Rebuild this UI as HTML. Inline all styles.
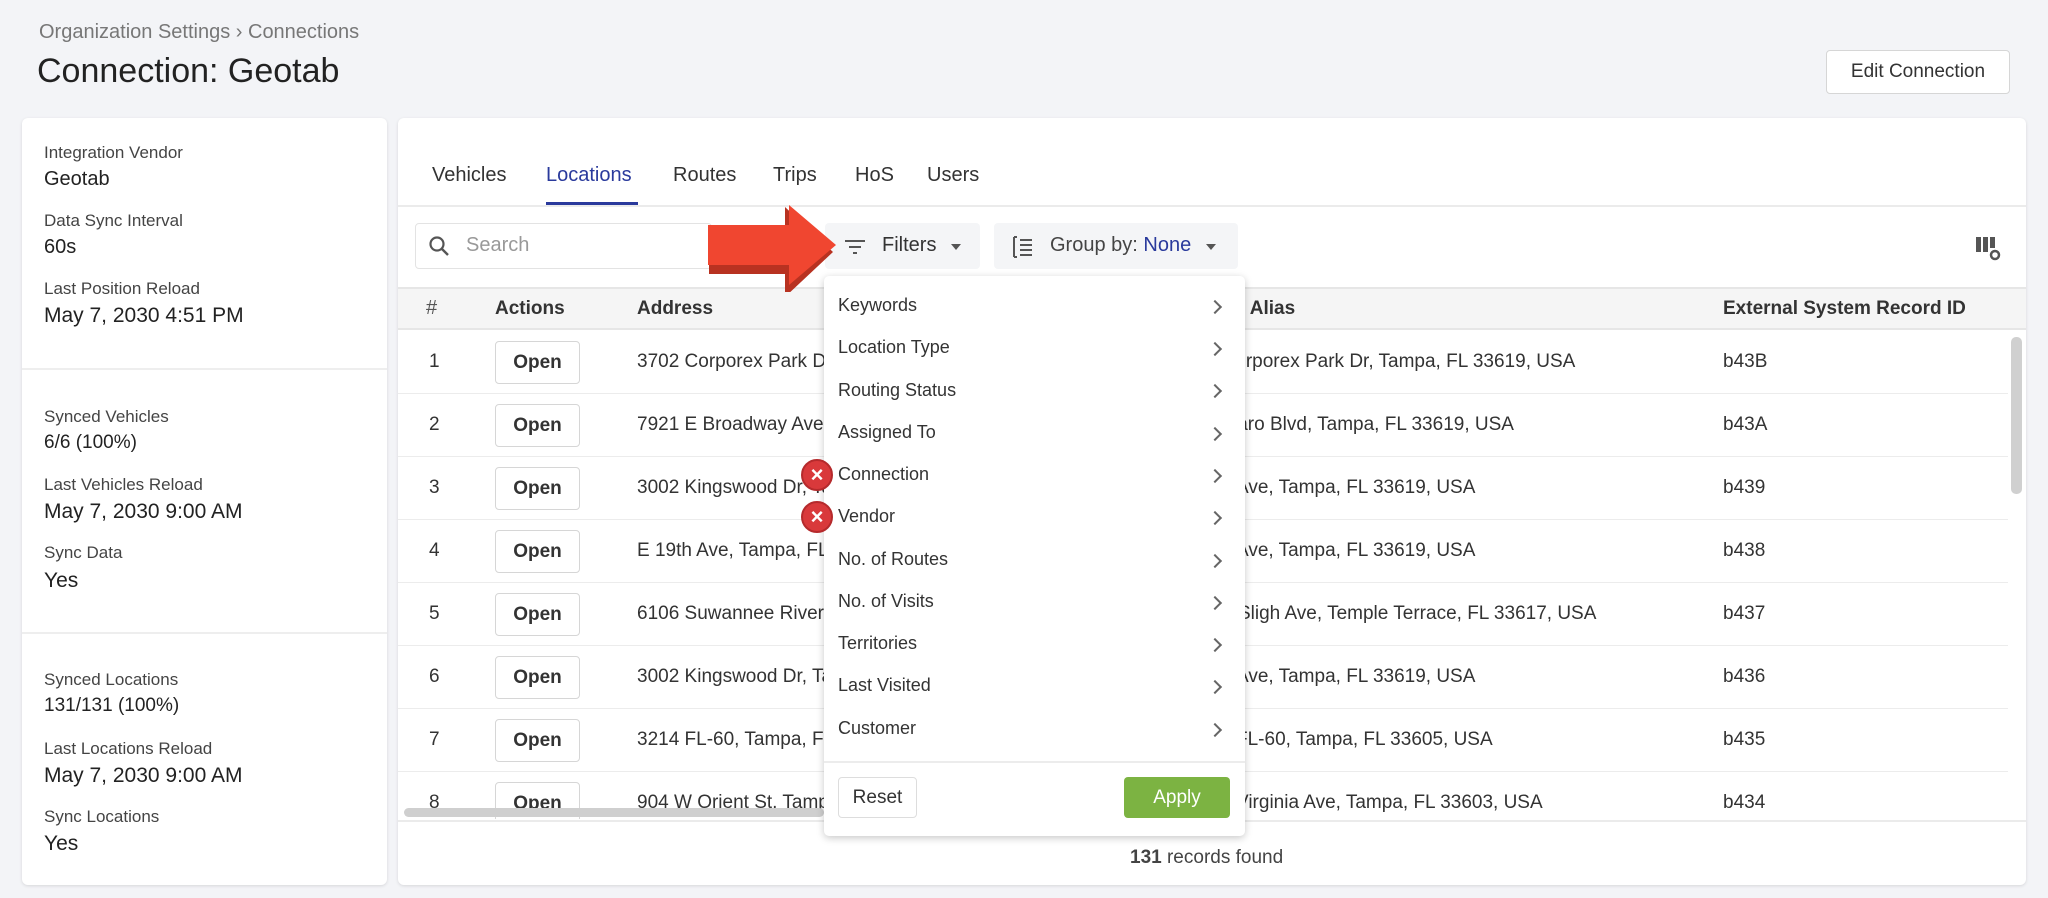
<!DOCTYPE html>
<html><head><meta charset="utf-8"><style>
*{box-sizing:border-box;margin:0;padding:0}
body{width:2048px;height:898px;overflow:hidden;background:#f3f4f7;font-family:"Liberation Sans",sans-serif;color:#333;position:relative}
.a{position:absolute;white-space:nowrap}
.card{position:absolute;background:#fff;border-radius:6px;box-shadow:0 1px 3px rgba(0,0,0,.12)}
.lbl{font-size:17px;color:#444;left:22px}
.val{font-size:20px;color:#222;left:22px}
.big{font-size:21px}
.tab{font-size:20px;top:46px;color:#333}
.row{position:absolute;left:0;width:1610px;height:63px;border-bottom:1px solid #ececec}
.c{position:absolute;top:0;line-height:62px;font-size:19px;color:#333;white-space:nowrap}
.open{position:absolute;left:97px;top:10px;width:85px;height:43px;border:1px solid #d6d6d6;border-radius:4px;font-size:19px;font-weight:bold;text-align:center;line-height:41px;color:#333;background:#fff}
.mi{position:absolute;left:14px;font-size:18px;color:#333}
.ch{position:absolute;left:386px;width:10px;height:10px;border-right:2px solid #666;border-top:2px solid #666;transform:rotate(45deg)}
.x{position:absolute;left:-23px;width:32px;height:32px;border-radius:50%;background:#d9393b;border:2px solid #b52a2c;color:#fff;font-size:22px;font-weight:bold;text-align:center;line-height:27px}
</style></head><body>
<div class="a" style="left:39px;top:21px;font-size:20px;color:#777">Organization Settings &#8250; Connections</div>
<div class="a" style="left:37px;top:52px;font-size:34px;color:#222">Connection: Geotab</div>
<div class="a" style="left:1826px;top:50px;width:184px;height:44px;border:1px solid #d6d6d6;border-radius:4px;background:#fff;font-size:19px;text-align:center;line-height:42px;color:#333">Edit Connection</div>

<div class="card" style="left:22px;top:118px;width:365px;height:767px">
<div class="a lbl" style="top:25px">Integration Vendor</div>
<div class="a val" style="top:50px">Geotab</div>
<div class="a lbl" style="top:93px">Data Sync Interval</div>
<div class="a val" style="top:118px">60s</div>
<div class="a lbl" style="top:161px">Last Position Reload</div>
<div class="a val big" style="top:186px">May 7, 2030 4:51 PM</div>
<div class="a" style="left:0;top:250px;width:365px;height:2px;background:#eee"></div>
<div class="a lbl" style="top:289px">Synced Vehicles</div>
<div class="a val" style="top:314px;font-size:19px">6/6 (100%)</div>
<div class="a lbl" style="top:357px">Last Vehicles Reload</div>
<div class="a val big" style="top:382px">May 7, 2030 9:00 AM</div>
<div class="a lbl" style="top:425px">Sync Data</div>
<div class="a val big" style="top:451px">Yes</div>
<div class="a" style="left:0;top:514px;width:365px;height:2px;background:#eee"></div>
<div class="a lbl" style="top:552px">Synced Locations</div>
<div class="a val" style="top:577px;font-size:19px">131/131 (100%)</div>
<div class="a lbl" style="top:621px">Last Locations Reload</div>
<div class="a val big" style="top:646px">May 7, 2030 9:00 AM</div>
<div class="a lbl" style="top:689px">Sync Locations</div>
<div class="a val big" style="top:714px">Yes</div>
</div>

<div class="card" style="left:398px;top:118px;width:1628px;height:767px;overflow:hidden">
<div class="a tab" style="left:34px">Vehicles</div>
<div class="a tab" style="left:148px;color:#2a3a9c">Locations</div>
<div class="a" style="left:148px;top:84px;width:92px;height:3px;background:#2a3a9c"></div>
<div class="a tab" style="left:275px">Routes</div>
<div class="a tab" style="left:375px">Trips</div>
<div class="a tab" style="left:457px">HoS</div>
<div class="a tab" style="left:529px">Users</div>
<div class="a" style="left:0;top:87px;width:1628px;height:2px;background:#ebebeb"></div>
<div class="a" style="left:17px;top:105px;width:297px;height:46px;border:1px solid #e3e3e3;border-radius:4px"></div>
<svg class="a" style="left:30px;top:117px" width="22" height="22" viewBox="0 0 22 22"><circle cx="9" cy="9" r="6.5" fill="none" stroke="#555" stroke-width="2.2"/><path d="M14 14l6 6" stroke="#555" stroke-width="2.4"/></svg>
<div class="a" style="left:68px;top:116px;font-size:20px;color:#999">Search</div>
<div class="a" style="left:427px;top:105px;width:155px;height:46px;background:#f4f5f7;border-radius:4px"></div>
<svg class="a" style="left:446px;top:120px" width="22" height="18"><path d="M1 3h20M5 9h12M9 15h4" stroke="#555" stroke-width="2"/></svg>
<div class="a" style="left:484px;top:116px;font-size:20px;color:#333">Filters</div>
<div class="a" style="left:553px;top:126px;border:5px solid transparent;border-top:6px solid #555"></div>
<div class="a" style="left:596px;top:105px;width:244px;height:46px;background:#f4f5f7;border-radius:4px"></div>
<svg class="a" style="left:614px;top:117px" width="22" height="24"><path d="M2 2v20M2 2h3M2 22h3M8 5h12M8 10h12M8 15h12M8 20h12" stroke="#555" stroke-width="2"/></svg>
<div class="a" style="left:652px;top:116px;font-size:20px;color:#444">Group by: <span style="color:#2a3a9c">None</span></div>
<div class="a" style="left:808px;top:126px;border:5px solid transparent;border-top:6px solid #555"></div>
<svg class="a" style="left:1578px;top:119px" width="26" height="24"><rect x="0" y="0" width="5" height="15" fill="#555"/><rect x="7" y="0" width="5" height="15" fill="#555"/><rect x="14" y="0" width="5" height="11" fill="#555"/><circle cx="19" cy="18" r="4" fill="none" stroke="#555" stroke-width="2.5"/></svg>

<div class="a" style="left:0;top:169px;width:1628px;height:43px;background:#f5f5f5;border-top:2px solid #e6e6e6;border-bottom:2px solid #e6e6e6"></div>
<div class="a" style="left:28px;top:179px;font-size:20px;color:#555">#</div>
<div class="a" style="left:97px;top:180px;font-size:19px;font-weight:bold;color:#333">Actions</div>
<div class="a" style="left:239px;top:180px;font-size:19px;font-weight:bold;color:#333">Address</div>
<div class="a" style="left:768px;top:180px;font-size:19px;font-weight:bold;color:#333">Location Alias</div>
<div class="a" style="left:1325px;top:180px;font-size:19px;font-weight:bold;color:#333">External System Record ID</div>

<div class="a" style="left:0;top:213px;width:1610px;height:488px;overflow:hidden">
<div class="row" style="top:0"><div class="c" style="left:31px">1</div><div class="open">Open</div><div class="c" style="left:239px">3702 Corporex Park Dr, Tampa</div><div class="c" style="left:776px">3702 Corporex Park Dr, Tampa, FL 33619, USA</div><div class="c" style="left:1325px">b43B</div></div>
<div class="row" style="top:63px"><div class="c" style="left:31px">2</div><div class="open">Open</div><div class="c" style="left:239px">7921 E Broadway Ave, Tampa</div><div class="c" style="left:778px">1 Massaro Blvd, Tampa, FL 33619, USA</div><div class="c" style="left:1325px">b43A</div></div>
<div class="row" style="top:126px"><div class="c" style="left:31px">3</div><div class="open">Open</div><div class="c" style="left:239px">3002 Kingswood Dr, Tampa</div><div class="c" style="left:838px">Ave, Tampa, FL 33619, USA</div><div class="c" style="left:1325px">b439</div></div>
<div class="row" style="top:189px"><div class="c" style="left:31px">4</div><div class="open">Open</div><div class="c" style="left:239px">E 19th Ave, Tampa, FL</div><div class="c" style="left:838px">Ave, Tampa, FL 33619, USA</div><div class="c" style="left:1325px">b438</div></div>
<div class="row" style="top:252px"><div class="c" style="left:31px">5</div><div class="open">Open</div><div class="c" style="left:239px">6106 Suwannee River</div><div class="c" style="left:840px">Sligh Ave, Temple Terrace, FL 33617, USA</div><div class="c" style="left:1325px">b437</div></div>
<div class="row" style="top:315px"><div class="c" style="left:31px">6</div><div class="open">Open</div><div class="c" style="left:239px">3002 Kingswood Dr, Tampa</div><div class="c" style="left:838px">Ave, Tampa, FL 33619, USA</div><div class="c" style="left:1325px">b436</div></div>
<div class="row" style="top:378px"><div class="c" style="left:31px">7</div><div class="open">Open</div><div class="c" style="left:239px">3214 FL-60, Tampa, FL</div><div class="c" style="left:838px">FL-60, Tampa, FL 33605, USA</div><div class="c" style="left:1325px">b435</div></div>
<div class="row" style="top:441px"><div class="c" style="left:31px">8</div><div class="open">Open</div><div class="c" style="left:239px">904 W Orient St, Tampa</div><div class="c" style="left:838px">Virginia Ave, Tampa, FL 33603, USA</div><div class="c" style="left:1325px">b434</div></div>
</div>
<div class="a" style="left:6px;top:690px;width:420px;height:9px;background:#cfcfcf;border-radius:5px"></div>
<div class="a" style="left:1613px;top:219px;width:11px;height:157px;background:#d0d0d0;border-radius:5px"></div>
<div class="a" style="left:0;top:702px;width:1628px;height:2px;background:#ebebeb"></div>
<div class="a" style="left:732px;top:729px;font-size:19px;color:#444"><b>131</b> records found</div>
</div>

<div class="a" style="left:824px;top:276px;width:421px;height:560px;background:#fff;border-radius:5px;box-shadow:0 2px 8px rgba(0,0,0,.22)">
<div class="mi" style="top:19px">Keywords</div><div class="ch" style="top:26px"></div>
<div class="mi" style="top:61px">Location Type</div><div class="ch" style="top:68px"></div>
<div class="mi" style="top:104px">Routing Status</div><div class="ch" style="top:110px"></div>
<div class="mi" style="top:146px">Assigned To</div><div class="ch" style="top:153px"></div>
<div class="mi" style="top:188px">Connection</div><div class="ch" style="top:195px"></div>
<div class="mi" style="top:230px">Vendor</div><div class="ch" style="top:237px"></div>
<div class="mi" style="top:273px">No. of Routes</div><div class="ch" style="top:280px"></div>
<div class="mi" style="top:315px">No. of Visits</div><div class="ch" style="top:322px"></div>
<div class="mi" style="top:357px">Territories</div><div class="ch" style="top:364px"></div>
<div class="mi" style="top:399px">Last Visited</div><div class="ch" style="top:406px"></div>
<div class="mi" style="top:442px">Customer</div><div class="ch" style="top:449px"></div>
<div class="x" style="top:183px">&#215;</div>
<div class="x" style="top:225px">&#215;</div>
<div class="a" style="left:0;top:485px;width:421px;height:2px;background:#ececec"></div>
<div class="a" style="left:14px;top:501px;width:79px;height:41px;border:1px solid #ddd;border-radius:4px;font-size:19px;text-align:center;line-height:39px;color:#333">Reset</div>
<div class="a" style="left:300px;top:501px;width:106px;height:41px;background:#7cb342;border-radius:4px;font-size:19px;text-align:center;line-height:41px;color:#fff">Apply</div>
</div>

<svg class="a" style="left:700px;top:200px" width="145" height="92"><path d="M12 29h76V6l48 45-48 45V73H12z" fill="#b83221" transform="translate(-3,1)"/><path d="M8 25h81V5l47 40-47 40V65H8z" fill="#f04630"/></svg>
</body></html>
